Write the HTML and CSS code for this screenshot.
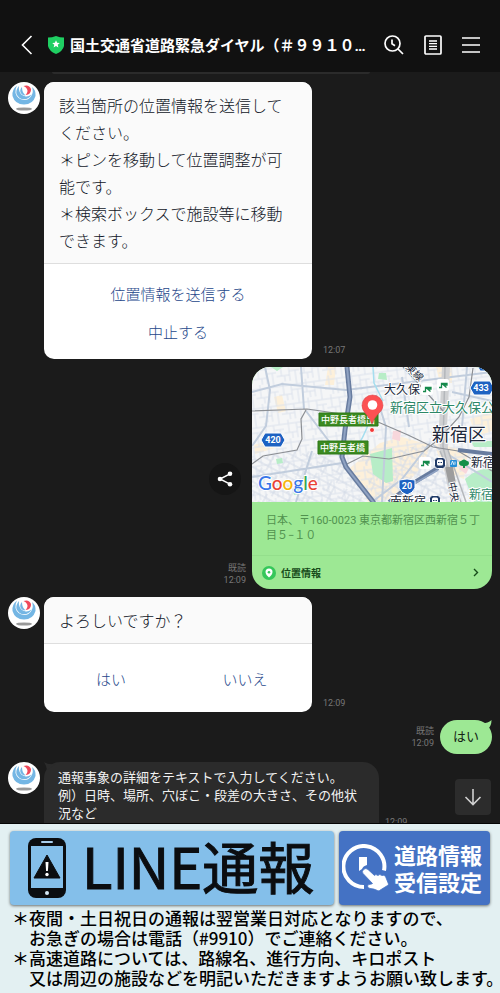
FILE: index.html
```html
<!DOCTYPE html>
<html lang="ja">
<head>
<meta charset="utf-8">
<meta name="viewport" content="width=device-width, initial-scale=1">
<title>国土交通省道路緊急ダイヤル</title>
<link rel="stylesheet" href="styles.css">
</head>
<body>
<svg class="defs" aria-hidden="true">
  <symbol id="avatar" viewBox="0 0 32 32">
    <circle cx="16" cy="16" r="16" fill="#fff"/>
    <path d="M9 3.500Q3.500 8 4.500 14Q7 22.500 16 22.500Q25 22.500 27.500 14Q28 8 24 5Q26 10 23 14.500Q20 18.300 16 18Q9 17 7.500 11Q7 7 9 3.500z" fill="#74b6e4"/>
    <path d="M11 4Q7.500 8 8.500 12Q11 17.300 16 17.300Q21 17.300 23.500 12.500Q20 15 17 14.200Q12.500 13 11.500 9.500Q10.500 7 11 4z" fill="#74b6e4"/>
    <path d="M14 5Q11.500 7.500 12.500 10.500Q14 13.500 17.500 13.500Q15 11 14.500 9Q14 7 14 5z" fill="#74b6e4"/>
    <path d="M15.500 4Q21 2 23 7Q23.500 12.500 17.500 13Q20.500 10 19 7Q18 5 15.500 4z" fill="#ef4a5c"/>
    <ellipse cx="16" cy="27" rx="8" ry="1.600" fill="#999"/>
  </symbol>
  <symbol id="station" viewBox="0 0 12 12">
    <rect x=".5" y=".5" width="11" height="11" rx="3" fill="#213b68" stroke="#fff"/>
    <rect x="3" y="2.500" width="6" height="6" rx="1.500" fill="#fff"/>
    <path d="M4 5.500h1.500M6.500 5.500H8M4 10l1-1M8 10L7 9" stroke="#213b68" stroke-width="1"/>
  </symbol>
  <symbol id="jr" viewBox="0 0 12 12">
    <rect width="12" height="12" rx="2" fill="#fff"/>
    <path d="M2 8.500h2.500V4.500H10v1.500H6.500L9.500 8.500" fill="none" stroke="#16894b" stroke-width="1.300"/>
  </symbol>
</svg>

<header class="topbar">
  <button class="icon-btn back" aria-label="戻る">
    <svg width="12" height="20" viewBox="0 0 12 20"><path d="M10.500 1L1.500 10l9 9" fill="none" stroke="#fff" stroke-width="1.600"/></svg>
  </button>
  <svg class="shield" width="16" height="18" viewBox="0 0 16 18"><path d="M8 0Q12 1.500 16 1.500V10Q15 15 8 18Q1 15 0 10V1.500Q4 1.500 8 0z" fill="#1fcf62"/><path d="M8 4.300l1.100 2.500 2.700.2-2.100 1.800.7 2.700L8 10.100l-2.400 1.400.7-2.700L4.200 7l2.700-.2z" fill="#fff"/></svg>
  <h1 class="title">国土交通省道路緊急ダイヤル（＃９９１０<span class="dots">…</span></h1>
  <nav class="actions">
    <button class="icon-btn" aria-label="検索">
      <svg width="20" height="20" viewBox="0 0 20 20" fill="none" stroke="#fff" stroke-width="1.700"><circle cx="8.500" cy="8.500" r="7.500"/><path d="M14 14l5 5M8 4.500v4.200l3 2"/></svg>
    </button>
    <button class="icon-btn" aria-label="ノート">
      <svg width="18" height="20" viewBox="0 0 18 20" fill="none" stroke="#fff" stroke-width="1.700"><rect x="1" y="1" width="16" height="18" rx="1"/><path d="M5 6h8M5 8.700h8M5 11.400h8M5 14h8" stroke-width="1.300"/></svg>
    </button>
    <button class="icon-btn" aria-label="メニュー">
      <svg width="18" height="16" viewBox="0 0 18 16" stroke="#fff" stroke-width="1.700"><path d="M0 1h18M0 8h18M0 15h18"/></svg>
    </button>
  </nav>
</header>

<main class="chat">
  <div class="previous"></div>

  <section class="row">
    <svg class="avatar"><use href="#avatar"/></svg>
    <div class="card">
      <p class="card-text">該当箇所の位置情報を送信してください。<br>＊ピンを移動して位置調整が可能です。<br>＊検索ボックスで施設等に移動できます。</p>
      <div class="choices stacked">
        <button class="choice">位置情報を送信する</button>
        <button class="choice">中止する</button>
      </div>
    </div>
    <div class="meta"><time>12:07</time></div>
  </section>

  <section class="row mine">
    <div class="side">
      <button class="share" aria-label="共有">
        <svg width="16" height="16" viewBox="0 0 16 16"><path d="M13 2.800L3 8l10 5.200" fill="none" stroke="#fff" stroke-width="1.500"/><g fill="#fff"><circle cx="13" cy="2.800" r="2.300"/><circle cx="3" cy="8" r="2.300"/><circle cx="13" cy="13.200" r="2.300"/></g></svg>
      </button>
      <div class="meta"><span>既読</span><time>12:09</time></div>
    </div>
    <article class="location">
      <svg class="map" viewBox="0 0 240 135" preserveAspectRatio="xMidYMid slice" role="img" aria-label="地図">
        <defs>
          <pattern id="streets" width="23" height="19" patternUnits="userSpaceOnUse" patternTransform="rotate(-8)">
            <path d="M0 4h23M0 13h13M5 0v13M13 4v15M19 0v4M19 9v10M13 9h10M8 13v6" fill="none" stroke="#dce2ec" stroke-width="1"/>
          </pattern>
          <pattern id="blocks" width="17" height="21" patternUnits="userSpaceOnUse" patternTransform="rotate(28)">
            <path d="M0 4h17M0 11h10M5 0v11M10 4v17M0 17h17" fill="none" stroke="#d3dae6" stroke-width="1"/>
          </pattern>
        </defs>
        <rect width="240" height="135" fill="#f5f6f7"/>
        <g fill="#fdf0da">
          <path d="M128 76l22-6 28 8-6 20-32 34-24 3-18-34z"/>
          <path d="M182 76l34 8-4 28-20-8zM218 52l22-8v20l-16 6zM22 30l8-2 4 16-8 2zM76 0l8 0-2 18-9 0zM184 0h16v16h-12z"/>
          <path d="M2 78l16-5 5 8-20 6z"/>
        </g>
        <rect width="240" height="135" fill="url(#streets)"/>
        <path d="M0 92l50-10 42 14 28 39H0zM112 90l65-14 38 50-34 9h-60z" fill="url(#blocks)"/>
        <g fill="#b7edc7">
          <path d="M118 87l22-6 1 33-7 2-13-9zM127 6l7 0 1 7-9-1zM19 0h12l-6 4zM40 121l8-1 0 7-6 1zM213 112q12-11 27-11v34h-18z"/>
          <path d="M24 92l6-1 1 5-6 1zM219 74h21v6h-18z"/>
        </g>
        <path d="M141 64l8-1-1 11-8-2zM210 96l8 3-4 8-7-5z" fill="#f8d7dc"/>
        <g fill="none" stroke="#c1cddd" stroke-width="2">
          <path d="M13 0l5 23-4 36-14 20M0 25l30-8 64 6 146-18M49 0l3 42M54 44l38 50M124 28l10 32-4 75M178 76l-28 36-30 23M150 10l7 50M200 25l40 9M215 0l-5 60M181 78l59 37M60 84l-16 51M0 110l90-14"/>
        </g>
        <path d="M121 0l1 16 9 18M121 45q-8 22-13 30l-12 6" fill="none" stroke="#a5deef" stroke-width="1.500"/>
        <g fill="none" stroke="#b4b7bb">
          <path d="M194 0l-3 60 1 22 11 53" stroke-width="8" stroke="#d0d1d3"/>
          <path d="M193 0l-2 80 14 55M188 84l21 51M196 83l18 52" stroke-width="1.500"/>
          <path d="M193 100l8 0 3 17-7 1z" fill="#9d9d9d" stroke="none"/>
        </g>
        <g fill="none" stroke="#8c8f94" stroke-width="1.200">
          <path d="M0 44l55-2 35 5 36 8 30 13 25 12 25 4 34 20M54 43l-5 9 1 20-5 11-34 6-11 8M93 98l18-9 26 3 35-8 15-12 20-22 10-20 4-29M151 0l14 15 27 30"/>
        </g>
        <path d="M95 0l3 30-5 33-3 27 4 10 28 36" fill="none" stroke="#687c9f" stroke-width="5" stroke-linejoin="round"/>
        <path d="M137 135l21-17 28-17M206 83l34 4" fill="none" stroke="#687c9f" stroke-width="4"/>
        <path d="M95 0l3 30-5 33-3 27 4 10 28 36M138 135l22-17 26-15" fill="none" stroke="#8fa2c2" stroke-width="2"/>
        <g fill="#1d62c2" stroke="#fff" stroke-width="1">
          <path d="M13 66h16l4 7-4 7H13l-4-7zM222 14h16l4 7-4 7h-16l-4-7zM147 113q8-2 16 0v8q-2 5-8 7-6-2-8-7zM226 0h12l-3 4h-7z"/>
        </g>
        <g class="badge-text"><text x="21" y="76">420</text><text x="229" y="24">433</text><text x="155" y="122">20</text></g>
        <path d="M67 46h59v13H67zM66 74h50v13H66z" fill="#3b8a20" stroke="#2f7818"/>
        <g class="exit-text"><text x="69" y="56">中野長者橋出</text><text x="68" y="84">中野長者橋</text></g>
        <use href="#jr" x="169" y="16" width="12" height="12"/>
        <use href="#jr" x="185" y="12" width="12" height="12"/>
        <use href="#jr" x="167" y="90" width="12" height="12"/>
        <use href="#station" x="182" y="90" width="12" height="12"/>
        <use href="#station" x="177" y="128" width="12" height="12"/>
        <rect x="198" y="93" width="7" height="7" rx="1" fill="#258ed8"/>
        <path d="M199 98l1.500-4 1.500 4M203 94.500v3" stroke="#fff" fill="none" stroke-width=".8"/>
        <path d="M207 96q0-2 2-2 3-3 6 0 2 0 2 2 0 3-4 3v2h-2v-2q-4 0-4-3z" fill="#14904a"/>
        <g class="place">
          <text x="132" y="27" class="s12">大久保</text>
          <text x="138" y="45" class="s13 park">新宿区立大久保公</text>
          <text x="180" y="74" class="s18">新宿区</text>
          <text x="219" y="100" class="s12">新宿</text>
          <text x="138" y="139" class="s12">南新宿</text>
          <text x="217" y="132" class="s12 park">新宿</text>
          <text class="s10" transform="translate(196 116) rotate(78)">中央</text>
          <text class="s10" transform="translate(153 1) rotate(44)">東線</text>
        </g>
        <path d="M120 57Q118 51 114 47Q110 43 110 38.500A10.500 10.500 0 0 1 131 38.500Q131 43 126 47Q122 51 120 57z" fill="#fc5153" stroke="#dd4548" stroke-width=".6"/>
        <circle cx="120.500" cy="38" r="4.800" fill="#fff"/>
        <circle cx="120" cy="63" r="2.500" fill="#f43735" stroke="#fff"/>
        <text x="6" y="123" class="google"><tspan fill="#3877e8">G</tspan><tspan fill="#e94335">o</tspan><tspan fill="#f6b50a">o</tspan><tspan fill="#3877e8">g</tspan><tspan fill="#34a853">l</tspan><tspan fill="#e94335">e</tspan></text>
      </svg>
      <p class="address">日本、〒160-0023 東京都新宿区西新宿５丁目５−１０</p>
      <a class="location-link" href="#map">
        <svg width="14" height="14" viewBox="0 0 14 14"><circle cx="7" cy="7" r="7" fill="#35c75a"/><path d="M7 11.500Q3.500 8.500 3.500 6a3.500 3.500 0 0 1 7 0Q10.500 8.500 7 11.500z" fill="#fff"/><circle cx="7" cy="6.200" r="1.300" fill="#35c75a"/></svg>
        <span>位置情報</span>
        <svg class="chevron" width="6" height="9" viewBox="0 0 6 9"><path d="M1 1l3.500 3.500L1 8" fill="none" stroke="#174b1a" stroke-width="1.400"/></svg>
      </a>
    </article>
  </section>

  <section class="row">
    <svg class="avatar"><use href="#avatar"/></svg>
    <div class="card">
      <p class="card-text">よろしいですか？</p>
      <div class="choices paired">
        <button class="choice">はい</button>
        <button class="choice">いいえ</button>
      </div>
    </div>
    <div class="meta"><time>12:09</time></div>
  </section>

  <section class="row mine">
    <div class="meta reply-meta"><span>既読</span><time>12:09</time></div>
    <p class="reply">はい<svg class="reply-tail" width="12" height="9" viewBox="0 0 12 9"><path d="M0 3Q7 4 11.500 0Q11.500 6 8 9z" fill="#9de894"/></svg></p>
  </section>

  <section class="row last">
    <svg class="avatar"><use href="#avatar"/></svg>
    <p class="bubble">通報事象の詳細をテキストで入力してください。<br>例）日時、場所、穴ぼこ・段差の大きさ、その他状況など<svg class="bubble-tail" width="12" height="8" viewBox="0 0 12 8"><path d="M0 0Q4 3 12 2L3 8Q2 3 0 0z" fill="#2b2b2b"/></svg></p>
    <div class="meta"><time>12:09</time></div>
  </section>

  <button class="to-bottom" aria-label="最新へ">
    <svg width="18" height="18" viewBox="0 0 18 18" fill="none" stroke="#d0d0d0" stroke-width="1.600"><path d="M9 1v15M1.500 9L9 16.500 16.500 9"/></svg>
  </button>
</main>

<footer class="richmenu">
  <div class="menu-buttons">
    <button class="report">
      <svg width="38" height="60" viewBox="0 0 38 60"><rect x="0" y="0" width="38" height="60" rx="8" fill="#0b0d10"/><rect x="3" y="8" width="32" height="42" fill="#84bfea"/><rect x="13" y="3" width="12" height="2" rx="1" fill="#a8cdec"/><circle cx="19" cy="55" r="2" fill="#d5e8f5"/><path d="M19 17L32 40H6z" fill="#0b0d10" stroke="#0b0d10" stroke-linejoin="round"/><path d="M17.500 24h3l-.6 9h-1.800z" fill="#fff"/><circle cx="19" cy="36.500" r="1.700" fill="#fff"/></svg>
      <span>LINE通報</span>
    </button>
    <button class="settings">
      <svg width="48" height="48" viewBox="0 0 48 48"><path d="M22 43A20.500 20.500 0 1 1 42 26.500" fill="none" stroke="#fff" stroke-width="4"/><path d="M17 13h8v8q-4 1-5 4l-3 2z" fill="#fff"/><path d="M21.500 25.500q2.500-2 4.500 0l6.500 6q1-2 3.500 0 1.500-2 4 0 2-1 3.500 1l3 7.500q0 1-1 1.500l-8 5q-1 .5-2 0-4-2-7.500-2-2.500-.5-2.500-2.500.5-2 4-2l1-.5-9.500-10q-1.500-2 .5-4z" fill="#fff" stroke="#4472c4" stroke-width=".8"/></svg>
      <span>道路情報<br>受信設定</span>
    </button>
  </div>
  <div class="notes">
    <p>＊夜間・土日祝日の通報は翌営業日対応となりますので、</p>
    <p class="indent">お急ぎの場合は電話（#9910）でご連絡ください。</p>
    <p>＊高速道路については、路線名、進行方向、キロポスト</p>
    <p class="indent">又は周辺の施設などを明記いただきますようお願い致します。</p>
  </div>
</footer>
</body>
</html>
```
FILE: styles.css
```css
* { box-sizing: border-box; }

body {
  margin: 0;
  min-height: 100vh;
  display: flex;
  flex-direction: column;
  background: #1b1b1b;
  font-family: Roboto, "Noto Sans CJK JP", sans-serif;
}

p, h1 { margin: 0; }

button {
  border: 0;
  padding: 0;
  background: none;
  font-family: inherit;
  cursor: pointer;
}

svg { display: block; flex: none; }

.defs { position: absolute; width: 0; height: 0; }

/* Header */
.topbar {
  display: flex;
  align-items: center;
  padding: 18px 20px 0 21px;
  height: 72px;
  flex: none;
  background: #111;
}

.icon-btn { display: flex; flex: none; }
.shield { margin: 0 6px 0 15px; }

.title {
  flex: 1;
  min-width: 0;
  overflow: hidden;
  white-space: nowrap;
  color: #fff;
  font: bold 15px/22px "Noto Sans CJK JP", sans-serif;
}

.dots { font-family: Roboto, sans-serif; }

.actions { display: flex; align-items: center; gap: 20px; }

/* Conversation */
.chat {
  position: relative;
  flex: 1 1 0;
  min-height: 0;
  overflow: hidden;
  padding: 0 8px;
}

.previous {
  width: 318px;
  height: 2px;
  margin: 0 0 8px 44px;
  border-radius: 0 0 8px 8px;
  background: #2b2b2b;
}

.row { display: flex; margin-bottom: 8px; }
.mine { justify-content: flex-end; }
.avatar { width: 32px; height: 32px; margin-right: 4px; }

.card {
  flex: 0 1 268px;
  overflow: hidden;
  border-radius: 10px;
  background: #fff;
  font-family: "Noto Sans CJK JP", sans-serif;
  font-weight: 300;
}

.card-text {
  padding: 10px 15px 9px;
  border-bottom: 1px solid #dedede;
  background: #fafafa;
  color: #111627;
  font-size: 16px;
  line-height: 27px;
}

.choice {
  height: 38px;
  color: #25478a;
  font-size: 15px;
  font-weight: 300;
}

.stacked { display: flex; flex-direction: column; padding: 10px 0 9px; }
.paired { display: grid; grid-template-columns: 1fr 1fr; padding: 15px 0; }

.meta {
  display: flex;
  flex-direction: column;
  align-self: flex-end;
  align-items: flex-end;
  padding: 0 6px 3px 11px;
  color: #777;
  font-size: 9px;
  line-height: 12px;
}

.mine .meta { padding-left: 0; }

/* Shared location */
.side {
  display: flex;
  flex-direction: column;
  align-items: flex-end;
  justify-content: flex-end;
  gap: 67px;
}

.share {
  display: flex;
  align-items: center;
  justify-content: center;
  width: 32px;
  height: 32px;
  margin-right: 11px;
  border-radius: 50%;
  background: #151515;
}

.location {
  flex: 0 1 240px;
  overflow: hidden;
  border-radius: 18px;
  background: #9de894;
}

.map { width: 100%; height: 135px; }

.badge-text {
  fill: #fff;
  font: bold 9px Roboto, sans-serif;
  text-anchor: middle;
}

.exit-text { fill: #fff; font: 500 9px "Noto Sans CJK JP", sans-serif; }

.place {
  fill: #20283a;
  stroke: #fff;
  stroke-width: 2px;
  stroke-linejoin: round;
  paint-order: stroke;
  font-family: "Noto Sans CJK JP", sans-serif;
}

.park { fill: #2c8767; }
.s10 { font-size: 10px; }
.s12 { font-size: 12px; }
.s13 { font-size: 13px; }
.s18 { font-size: 18px; }

.google {
  font: 500 19px Lato, sans-serif;
  stroke: #fff;
  stroke-width: 2px;
  paint-order: stroke;
}

.address {
  padding: 11px 8px 12px 14px;
  border-bottom: 1px solid #94df8c;
  color: #51924f;
  font-size: 11px;
  line-height: 15px;
}

.location-link {
  display: flex;
  align-items: center;
  gap: 5px;
  height: 33px;
  padding: 0 13px 0 10px;
  color: #174b1a;
  font-size: 10px;
  font-weight: bold;
  text-decoration: none;
}

.chevron { margin-left: auto; }

/* Text bubbles */
.reply {
  position: relative;
  min-width: 52px;
  padding: 0 13px;
  border-radius: 17px;
  background: #9de894;
  color: #142314;
  font-size: 13px;
  line-height: 34px;
}

.reply-tail { position: absolute; top: 0; right: 0; }
.reply-meta { padding-bottom: 5px; }

.bubble {
  position: relative;
  flex: 0 1 335px;
  padding: 6px 14px 21px;
  border-radius: 16px;
  background: #2b2b2b;
  color: #f2f2f2;
  font: 400 13px/18px "Noto Sans CJK JP", sans-serif;
}

.bubble-tail { position: absolute; top: 0; left: 0; }
.last .meta { padding-left: 6px; padding-bottom: 15px; }

.to-bottom {
  position: absolute;
  right: 9px;
  bottom: 8px;
  display: flex;
  align-items: center;
  justify-content: center;
  width: 36px;
  height: 36px;
  border-radius: 4px;
  background: #2c2c2c;
}

/* Rich menu */
.richmenu {
  flex: none;
  overflow: hidden;
  padding: 7px 10px 5px;
  border-top: 1px solid #050505;
  background: #e3f0f2;
  color: #000;
  font-family: "Noto Sans CJK JP", sans-serif;
}

.menu-buttons {
  display: grid;
  grid-template-columns: 324fr 151fr;
  gap: 5px;
  margin-bottom: 3px;
}

.menu-buttons button {
  display: flex;
  align-items: center;
  min-width: 0;
  height: 74px;
  border-radius: 4px;
  box-shadow: 0 1px 3px #0008;
  white-space: nowrap;
}

.menu-buttons .report {
  gap: 16px;
  padding-left: 18px;
  background: #84bfea;
  color: #0b0d10;
  font-size: 56px;
  font-weight: 400;
  line-height: 74px;
  -webkit-text-stroke: 1px #0b0d10;
}

.report span { margin-top: -6px; }

.menu-buttons .settings {
  gap: 4px;
  padding-left: 3px;
  background: #4472c4;
  color: #fff;
  font-size: 22px;
  font-weight: 700;
  line-height: 27px;
}

.notes {
  padding-left: 2px;
  font-size: 17px;
  font-weight: 500;
  line-height: 20px;
  white-space: nowrap;
}

.indent { padding-left: 17px; }
```
